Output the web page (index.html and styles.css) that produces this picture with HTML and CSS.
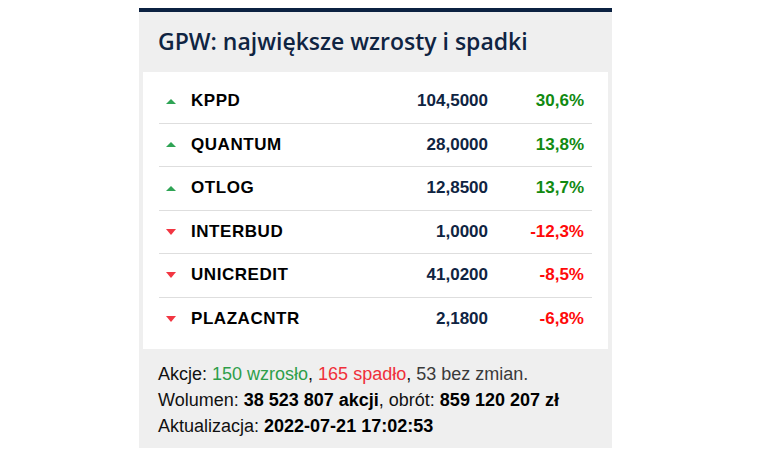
FILE: index.html
```html
<!DOCTYPE html>
<html lang="pl">
<head>
<meta charset="utf-8">
<link rel="stylesheet" href="styles.css">
</head>
<body>
<div class="card">
  <h2 class="title">GPW: największe wzrosty i spadki</h2>
  <div class="list">
    <div class="row"><span class="arrow up"></span><span class="name">KPPD</span><span class="price">104,5000</span><span class="pct plus">30,6%</span></div>
    <div class="row"><span class="arrow up"></span><span class="name">QUANTUM</span><span class="price">28,0000</span><span class="pct plus">13,8%</span></div>
    <div class="row"><span class="arrow up"></span><span class="name">OTLOG</span><span class="price">12,8500</span><span class="pct plus">13,7%</span></div>
    <div class="row"><span class="arrow down"></span><span class="name">INTERBUD</span><span class="price">1,0000</span><span class="pct minus">-12,3%</span></div>
    <div class="row"><span class="arrow down"></span><span class="name">UNICREDIT</span><span class="price">41,0200</span><span class="pct minus">-8,5%</span></div>
    <div class="row"><span class="arrow down"></span><span class="name">PLAZACNTR</span><span class="price">2,1800</span><span class="pct minus">-6,8%</span></div>
  </div>
  <div class="footer">
    <p>Akcje: <span class="g">150 wzrosło</span>, <span class="r">165 spadło</span>, <span class="n">53 bez zmian.</span></p>
    <p>Wolumen: <b>38 523 807 akcji</b>, obrót: <b>859 120 207 zł</b></p>
    <p>Aktualizacja: <b>2022-07-21 17:02:53</b></p>
  </div>
</div>
</body>
</html>
```
FILE: styles.css
```css
html, body {
  margin: 0;
  padding: 0;
  background: #fff;
}
body {
  padding: 8px 0 0 139px;
}
.card {
  width: 473px;
  box-sizing: border-box;
  background: #efefef;
  border-top: 4px solid #0b2141;
  padding: 0 4px 0 4px;
  height: 440px;
}
.title {
  margin: 0;
  height: 60px;
  box-sizing: border-box;
  padding: 14px 0 0 15px;
  font-family: "Open Sans", sans-serif;
  font-weight: 600;
  font-size: 23px;
  line-height: 30px;
  color: #0f2442;
}
.list {
  background: #fff;
  padding: 8px 16px 9px 16px;
}
.row {
  display: grid;
  grid-template-columns: 32px 1fr auto 104px;
  align-items: center;
  height: 42.5px;
  border-bottom: 1px solid #dedede;
  font-family: "Liberation Sans", Arial, sans-serif;
  font-weight: bold;
  font-size: 17px;
}
.row:last-child {
  border-bottom: none;
}
.arrow {
  width: 0;
  height: 0;
  margin-left: 7px;
  border-left: 5px solid transparent;
  border-right: 5px solid transparent;
}
.arrow.up {
  border-bottom: 5px solid #2fa455;
}
.arrow.down {
  border-top: 6px solid #f23642;
}
.name {
  color: #000;
  letter-spacing: 0.55px;
}
.price {
  color: #0f2442;
  text-align: right;
}
.pct {
  text-align: right;
  padding-right: 8px;
}
.pct.plus { color: #118a11; }
.pct.minus { color: #ff0a0a; }
.footer {
  padding: 12px 0 0 15px;
  font-family: "Liberation Sans", Arial, sans-serif;
  font-size: 18px;
  color: #111;
}
.footer p {
  margin: 0;
  line-height: 26px;
}
.footer b { color: #000; }
.g { color: #2e9e4a; }
.r { color: #ef2f3a; }
.n { color: #3a3a3a; }
```
